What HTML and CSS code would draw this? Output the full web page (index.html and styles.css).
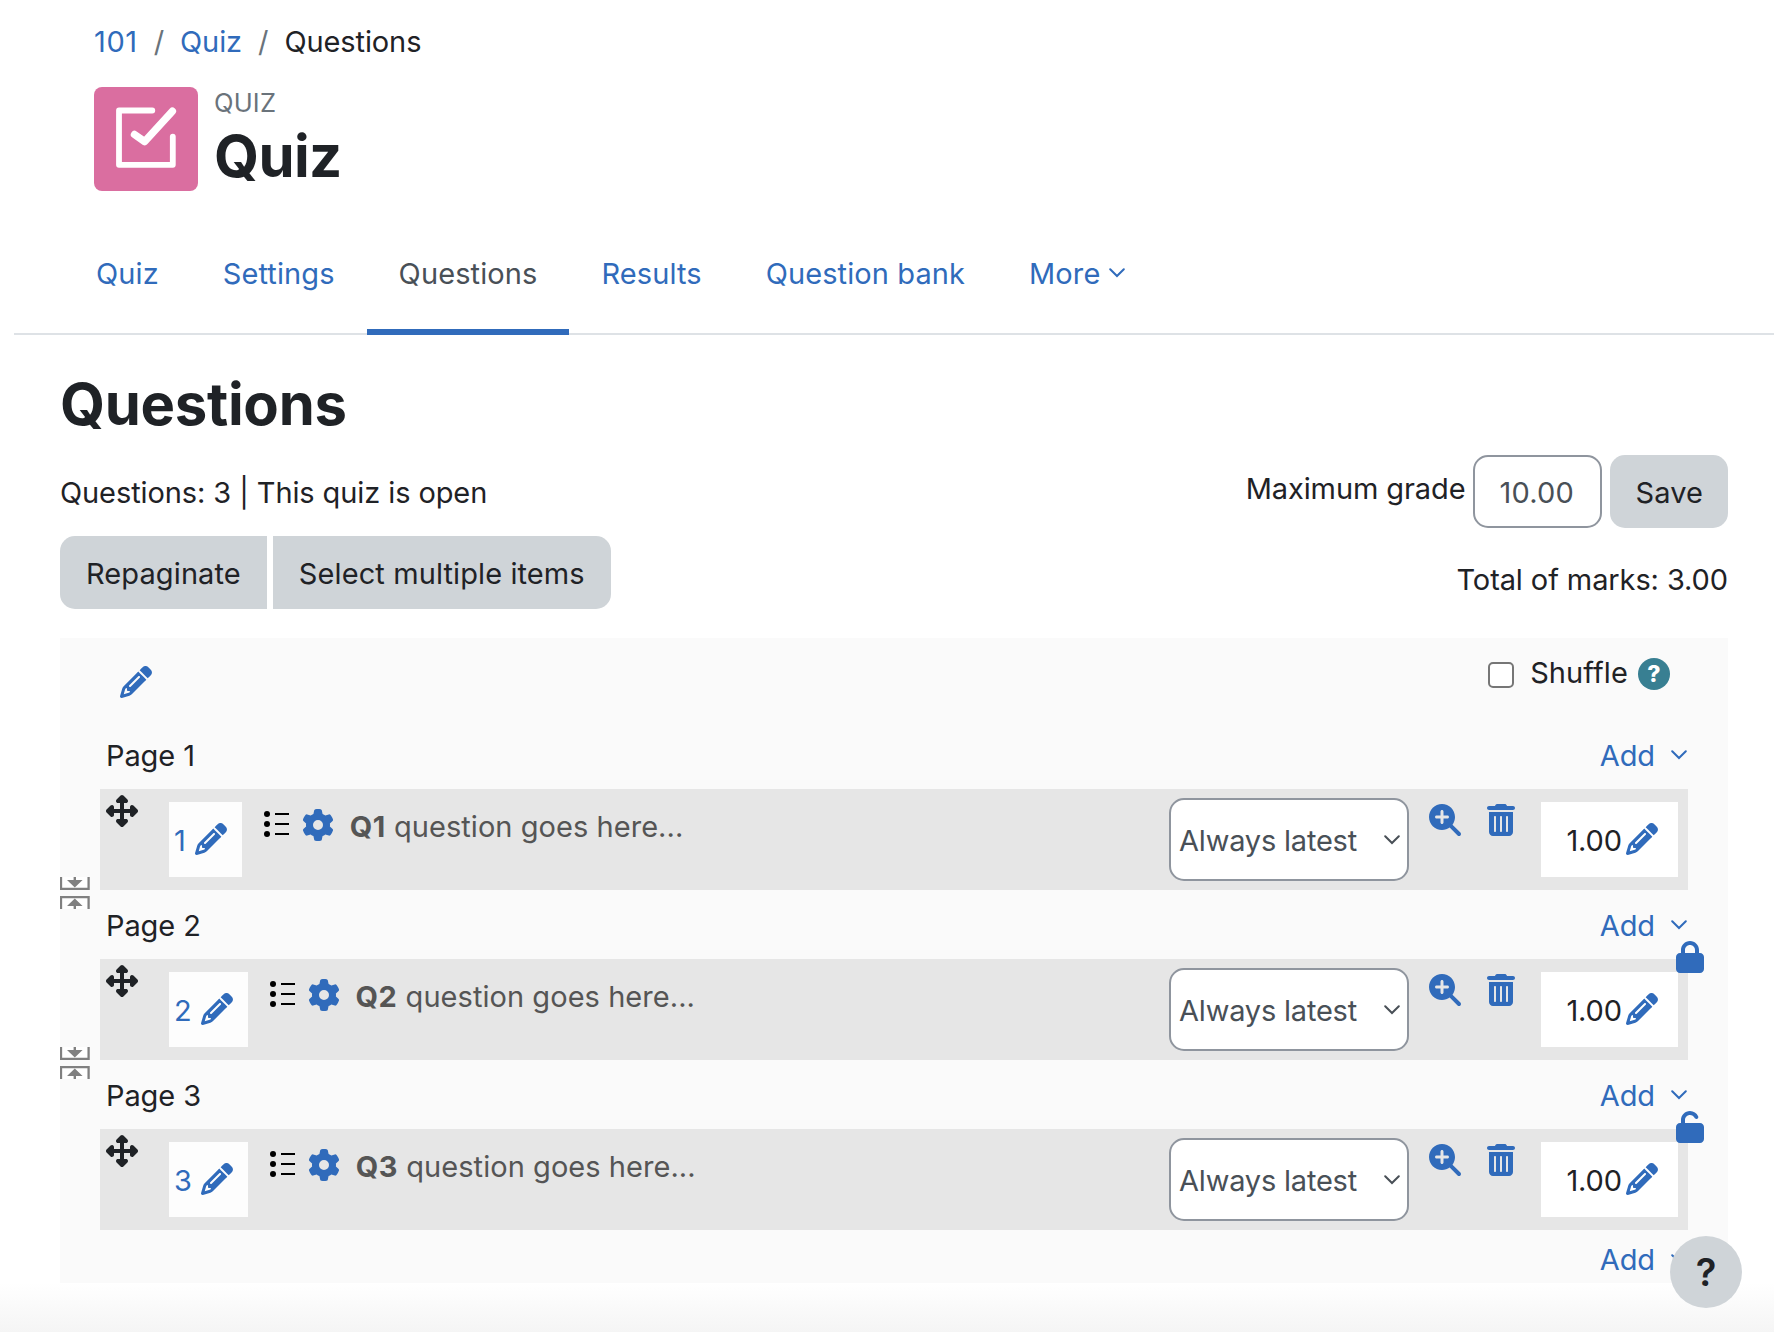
FILE: index.html
```html
<!DOCTYPE html>
<html lang="en">
<head>
    <meta charset="UTF-8">
    <meta name="viewport" content="width=device-width, initial-scale=1.0">
    <title>Quiz: Questions</title>
    <link rel="stylesheet" href="styles.css">
</head>
<body>
    <!-- Shared icons -->
    <svg class="sprite">
        <symbol id="pencil" viewBox="0 0 512 512"><path d="M410.3 231l11.3-11.3-33.9-33.9-62.1-62.1L291.7 89.8l-11.3 11.3-22.6 22.6L58.6 322.9c-10.4 10.4-18 23.3-22.2 37.4L1 480.7c-2.5 8.4-.2 17.5 6.1 23.7s15.3 8.5 23.7 6.1l120.3-35.4c14.1-4.2 27-11.8 37.4-22.2L387.7 253.7 410.3 231zM160 399.4l-9.1 22.7c-4 3.1-8.5 5.4-13.3 6.9L59.4 452l23-78.1c1.4-4.9 3.8-9.4 6.9-13.3l22.7-9.1v32c0 8.8 7.2 16 16 16h32zM362.7 18.7L348.3 33.2 325.7 55.8 314.3 67.1l33.9 33.9 62.1 62.1 33.9 33.9 11.3-11.3 22.6-22.6 14.5-14.5c25-25 25-65.5 0-90.5L453.3 18.7c-25-25-65.5-25-90.5 0zm-47.4 168l-144 144c-6.2 6.2-16.4 6.2-22.6 0s-6.2-16.4 0-22.6l144-144c6.2-6.2 16.4-6.2 22.6 0s6.2 16.4 0 22.6z"/></symbol>
        <symbol id="gear" viewBox="0 0 512 512"><path d="M495.9 166.6c3.2 8.7 .5 18.4-6.4 24.6l-43.3 39.4c1.1 8.3 1.7 16.8 1.7 25.4s-.6 17.1-1.7 25.4l43.3 39.4c6.9 6.2 9.6 15.9 6.4 24.6c-4.4 11.9-9.7 23.3-15.8 34.3l-4.7 8.1c-6.6 11-14 21.4-22.1 31.2c-5.9 7.2-15.7 9.6-24.5 6.8l-55.7-17.7c-13.4 10.3-28.2 18.9-44 25.4l-12.5 57.1c-2 9.1-9 16.3-18.2 17.8c-13.8 2.3-28 3.5-42.5 3.5s-28.7-1.2-42.5-3.5c-9.2-1.5-16.2-8.7-18.2-17.8l-12.5-57.1c-15.8-6.5-30.6-15.1-44-25.4L83.1 425.9c-8.8 2.8-18.6 .3-24.5-6.8c-8.1-9.8-15.5-20.2-22.1-31.2l-4.7-8.1c-6.1-11-11.4-22.4-15.8-34.3c-3.2-8.7-.5-18.4 6.4-24.6l43.3-39.4C64.6 273.1 64 264.6 64 256s.6-17.1 1.7-25.4L22.4 191.2c-6.9-6.2-9.6-15.9-6.4-24.6c4.4-11.9 9.7-23.3 15.8-34.3l4.7-8.1c6.6-11 14-21.4 22.1-31.2c5.9-7.2 15.7-9.6 24.5-6.8l55.7 17.7c13.4-10.3 28.2-18.9 44-25.4l12.5-57.1c2-9.1 9-16.3 18.2-17.8C227.3 1.2 241.5 0 256 0s28.7 1.2 42.5 3.5c9.2 1.5 16.2 8.7 18.2 17.8l12.5 57.1c15.8 6.5 30.6 15.1 44 25.4l55.7-17.7c8.8-2.8 18.6-.3 24.5 6.8c8.1 9.8 15.5 20.2 22.1 31.2l4.7 8.1c6.1 11 11.4 22.4 15.8 34.3zM256 336a80 80 0 1 0 0-160 80 80 0 1 0 0 160z"/></symbol>
        <symbol id="move" viewBox="0 0 512 512"><path d="M278.6 9.4c-12.5-12.5-32.8-12.5-45.3 0l-64 64c-9.2 9.2-11.9 22.9-6.9 34.9s16.6 19.8 29.6 19.8h32v96H128V192c0-12.9-7.8-24.6-19.8-29.6s-25.7-2.2-34.9 6.9l-64 64c-12.5 12.5-12.5 32.8 0 45.3l64 64c9.2 9.2 22.9 11.9 34.9 6.9s19.8-16.6 19.8-29.6V288h96v96H192c-12.9 0-24.6 7.8-29.6 19.8s-2.2 25.7 6.9 34.9l64 64c12.5 12.5 32.8 12.5 45.3 0l64-64c9.2-9.2 11.9-22.9 6.9-34.9s-16.6-19.8-29.6-19.8H288V288h96v32c0 12.9 7.8 24.6 19.8 29.6s25.7 2.2 34.9-6.9l64-64c12.5-12.5 12.5-32.8 0-45.3l-64-64c-9.2-9.2-22.9-11.9-34.9-6.9s-19.8 16.6-19.8 29.6v32H288V128h32c12.9 0 24.6-7.8 29.6-19.8s2.2-25.7-6.9-34.9l-64-64z"/></symbol>
        <symbol id="preview" viewBox="0 0 512 512"><path d="M416 208c0 45.9-14.9 88.3-40 122.7L502.6 457.4c12.5 12.5 12.5 32.8 0 45.3s-32.8 12.5-45.3 0L330.7 376c-34.4 25.2-76.8 40-122.7 40C93.1 416 0 322.9 0 208S93.1 0 208 0S416 93.1 416 208zM184 296c0 13.3 10.7 24 24 24s24-10.7 24-24V232h64c13.3 0 24-10.7 24-24s-10.7-24-24-24H232V120c0-13.3-10.7-24-24-24s-24 10.7-24 24v64H120c-13.3 0-24 10.7-24 24s10.7 24 24 24h64v64z"/></symbol>
        <symbol id="trash" viewBox="0 0 448 512"><path fill-rule="evenodd" d="M135.2 17.7L128 32H32C14.3 32 0 46.3 0 64S14.3 96 32 96H416c17.7 0 32-14.3 32-32s-14.3-32-32-32H320l-7.2-14.3C307.4 6.8 296.3 0 284.2 0H163.8c-12.1 0-23.2 6.8-28.6 17.7zM32 128V448c0 35.3 28.7 64 64 64H352c35.3 0 64-28.7 64-64V128zM112 208c0-8.8 7.2-16 16-16s16 7.2 16 16V432c0 8.8-7.2 16-16 16s-16-7.2-16-16zM208 208c0-8.8 7.2-16 16-16s16 7.2 16 16V432c0 8.8-7.2 16-16 16s-16-7.2-16-16zM304 208c0-8.8 7.2-16 16-16s16 7.2 16 16V432c0 8.8-7.2 16-16 16s-16-7.2-16-16z"/></symbol>
        <symbol id="lock" viewBox="0 0 448 512"><path d="M144 144v48H304V144c0-44.2-35.8-80-80-80s-80 35.8-80 80zM80 192V144C80 64.5 144.5 0 224 0s144 64.5 144 144v48h16c35.3 0 64 28.7 64 64V448c0 35.3-28.7 64-64 64H64c-35.3 0-64-28.7-64-64V256c0-35.3 28.7-64 64-64H80z"/></symbol>
        <symbol id="unlock" viewBox="0 0 448 512"><path d="M144 144c0-44.2 35.8-80 80-80c31.9 0 59.4 18.6 72.3 45.7c7.6 16 26.7 22.8 42.6 15.2s22.8-26.7 15.2-42.6C331 33.7 281.5 0 224 0C144.5 0 80 64.5 80 144v48H64c-35.3 0-64 28.7-64 64V448c0 35.3 28.7 64 64 64H384c35.3 0 64-28.7 64-64V256c0-35.3-28.7-64-64-64H144V144z"/></symbol>
        <symbol id="chevron" viewBox="0 0 16 10"><path d="M1.2 1.2L8 8L14.8 1.2" fill="none" stroke="currentColor" stroke-width="2" stroke-linecap="round"/></symbol>
        <symbol id="multichoice" viewBox="0 0 26 26"><circle cx="3" cy="3" r="3"/><circle cx="3" cy="13" r="3"/><circle cx="3" cy="23" r="3"/><path d="M11 2h14v2H11zM11 12h14v2H11zM11 22h14v2H11z"/></symbol>
        <symbol id="pagebreak" viewBox="0 0 30 32"><path d="M0 0h29.6v13H0zM0 19h29.6v13H0z" fill="#fff"/><path d="M1 0v11.8h27.6V0M1 32V20.2h27.6V32" fill="none" stroke="#808080" stroke-width="2.3"/><path d="M13.6 0h2.4v3h6.6l-7.8 7.4-7.8-7.4h6.6zM13.6 32h2.4v-3h6.6l-7.8-7.4-7.8 7.4h6.6z" fill="#808080"/></symbol>
    </svg>

    <nav class="breadcrumb">
        <a href="#">101</a><span class="sep">/</span><a href="#">Quiz</a><span class="sep">/</span><span>Questions</span>
    </nav>

    <header class="page-header">
        <div class="activity-icon">
            <svg viewBox="0 0 104 104">
                <path stroke-width="5.8" d="M58.3 23.5H25V77.8H78.8V49.6"/>
                <path stroke-width="7.4" d="M40.5 47.5L50.7 54.6L78.4 24.2"/>
            </svg>
        </div>
        <div class="page-title">
            <div class="activity-type">QUIZ</div>
            <h1>Quiz</h1>
        </div>
    </header>

    <nav class="tabs">
        <a href="#">Quiz</a>
        <a href="#">Settings</a>
        <a href="#" class="active">Questions</a>
        <a href="#">Results</a>
        <a href="#">Question bank</a>
        <a href="#">More<svg class="chevron"><use href="#chevron"/></svg></a>
    </nav>

    <main class="content">
        <h2>Questions</h2>

        <div class="controls">
            <div class="controls-left">
                <div>Questions: 3 | This quiz is open</div>
                <div class="btn-group">
                    <button class="btn">Repaginate</button>
                    <button class="btn">Select multiple items</button>
                </div>
            </div>
            <div class="controls-right">
                <div class="max-grade">
                    <label for="maxgrade">Maximum grade</label>
                    <input type="text" id="maxgrade" value="10.00">
                    <button class="btn save">Save</button>
                </div>
                <div class="total">Total of marks: 3.00</div>
            </div>
        </div>

        <div class="quiz-box">
            <div class="section-head">
                <svg class="icon"><use href="#pencil"/></svg>
                <div class="shuffle">
                    <input type="checkbox" id="shuffle">
                    <label for="shuffle">Shuffle</label>
                    <span class="help-icon">?</span>
                </div>
            </div>

            <div class="page-row">
                <span>Page 1</span>
                <a href="#" class="add">Add<svg class="chevron"><use href="#chevron"/></svg></a>
            </div>
            <div class="slot">
                <svg class="icon move"><use href="#move"/></svg>
                <a href="#" class="number">1<svg class="icon"><use href="#pencil"/></svg></a>
                <svg class="type"><use href="#multichoice"/></svg>
                <svg class="icon gear"><use href="#gear"/></svg>
                <div class="question"><b>Q1</b> question goes here...</div>
                <div class="version">Always latest<svg class="chevron"><use href="#chevron"/></svg></div>
                <svg class="icon preview"><use href="#preview"/></svg>
                <svg class="icon trash"><use href="#trash"/></svg>
                <div class="mark">1.00<svg class="icon"><use href="#pencil"/></svg></div>
                <svg class="pagebreak"><use href="#pagebreak"/></svg>
            </div>

            <div class="page-row">
                <span>Page 2</span>
                <a href="#" class="add">Add<svg class="chevron"><use href="#chevron"/></svg></a>
            </div>
            <div class="slot">
                <svg class="icon move"><use href="#move"/></svg>
                <a href="#" class="number">2<svg class="icon"><use href="#pencil"/></svg></a>
                <svg class="type"><use href="#multichoice"/></svg>
                <svg class="icon gear"><use href="#gear"/></svg>
                <div class="question"><b>Q2</b> question goes here...</div>
                <div class="version">Always latest<svg class="chevron"><use href="#chevron"/></svg></div>
                <svg class="icon preview"><use href="#preview"/></svg>
                <svg class="icon trash"><use href="#trash"/></svg>
                <div class="mark">1.00<svg class="icon"><use href="#pencil"/></svg></div>
                <svg class="pagebreak"><use href="#pagebreak"/></svg>
                <svg class="dependency"><use href="#lock"/></svg>
            </div>

            <div class="page-row">
                <span>Page 3</span>
                <a href="#" class="add">Add<svg class="chevron"><use href="#chevron"/></svg></a>
            </div>
            <div class="slot">
                <svg class="icon move"><use href="#move"/></svg>
                <a href="#" class="number">3<svg class="icon"><use href="#pencil"/></svg></a>
                <svg class="type"><use href="#multichoice"/></svg>
                <svg class="icon gear"><use href="#gear"/></svg>
                <div class="question"><b>Q3</b> question goes here...</div>
                <div class="version">Always latest<svg class="chevron"><use href="#chevron"/></svg></div>
                <svg class="icon preview"><use href="#preview"/></svg>
                <svg class="icon trash"><use href="#trash"/></svg>
                <div class="mark">1.00<svg class="icon"><use href="#pencil"/></svg></div>
                <svg class="dependency"><use href="#unlock"/></svg>
            </div>

            <div class="page-row last">
                <a href="#" class="add">Add<svg class="chevron"><use href="#chevron"/></svg></a>
            </div>
        </div>
    </main>

    <div class="footer-shade"></div>
    <button class="help-button">?</button>
</body>
</html>
```
FILE: styles.css
```css
* {
    box-sizing: border-box;
}
body {
    margin: 0;
    padding-top: 19px;
    height: 1332px;
    overflow: hidden;
    background: #fff;
    color: #1f2226;
    font-family: Inter, "Liberation Sans", sans-serif;
    font-size: 29px;
    line-height: 45px;
    letter-spacing: -0.1px;
}
a {
    color: #306bbb;
    text-decoration: none;
}
h1, h2 {
    margin: 0;
    font-size: 58px;
    line-height: 69px;
    font-weight: 700;
    letter-spacing: -0.3px;
}
h1 {
    letter-spacing: -0.6px;
}
button, input {
    font: inherit;
    letter-spacing: inherit;
    color: inherit;
}
svg {
    display: block;
    flex: none;
    fill: currentColor;
}
.sprite {
    position: absolute;
    width: 0;
    height: 0;
}
.icon {
    width: 32px;
    height: 32px;
    color: #306bbb;
}
.chevron {
    width: 16px;
    height: 10px;
}
.breadcrumb {
    display: flex;
    padding-left: 94px;
}
.breadcrumb a:first-child {
    letter-spacing: 0.6px;
}
.sep {
    padding: 0 16px;
    color: #6a737b;
}
.page-header {
    display: flex;
    gap: 16px;
    margin-top: 23px;
    padding-left: 94px;
}
.activity-icon {
    width: 104px;
    height: 104px;
    border-radius: 8px;
    background: #da6ea0;
}
.activity-icon svg {
    fill: none;
    stroke: #fff;
    stroke-linecap: round;
    stroke-linejoin: round;
}
.activity-type {
    height: 35px;
    font-size: 25.5px;
    line-height: 32px;
    letter-spacing: 0.2px;
    color: #6a737b;
}
.tabs {
    display: flex;
    height: 122px;
    margin: 22px 0 0 14px;
    padding-left: 50px;
    border-bottom: 2px solid #dee2e6;
    letter-spacing: 0.1px;
}
.tabs a {
    display: flex;
    height: 122px;
    padding: 38px 32px 0;
}
.tabs a.active {
    color: #495057;
    border-bottom: 6px solid #306bbb;
}
.tabs .chevron {
    margin: 17px 0 0 9px;
}
.content {
    padding: 35px 46px 0 60px;
}
.controls {
    display: flex;
    justify-content: space-between;
    height: 183px;
    margin-top: 16px;
}
.controls-left {
    padding-top: 15px;
}
.btn {
    height: 73px;
    padding: 2px 26px 0;
    border: none;
    border-radius: 15px;
    background: #cfd4d8;
    letter-spacing: 0.1px;
}
.btn.save {
    padding: 2px 25px 0;
}
.btn-group {
    display: flex;
    gap: 6px;
    margin-top: 21px;
}
.btn-group .btn:first-child {
    border-radius: 15px 0 0 15px;
}
.btn-group .btn:last-child {
    border-radius: 0 15px 15px 0;
}
.max-grade {
    display: flex;
    justify-content: flex-end;
}
.max-grade label {
    margin-top: 11px;
}
.max-grade input {
    width: 129px;
    height: 73px;
    margin: 0 8px;
    padding: 2px 24px 0;
    border: 2px solid #8f959e;
    border-radius: 15px;
    background: #fff;
    color: #495057;
    letter-spacing: 0.2px;
}
.total {
    margin-top: 29px;
    text-align: right;
}
.quiz-box {
    height: 645px;
    padding: 0 40px;
    background: #fafafa;
}
.section-head {
    display: flex;
    justify-content: space-between;
    height: 95px;
    padding: 12px 18px 0 20px;
}
.section-head > .icon {
    margin-top: 16px;
}
.shuffle {
    display: flex;
    letter-spacing: 0.1px;
}
.shuffle input {
    appearance: none;
    width: 26px;
    height: 26px;
    margin: 12px 16px 0 0;
    border: 2px solid #767676;
    border-radius: 5px;
    background: #fff;
}
.help-icon {
    width: 32px;
    height: 32px;
    margin: 8px 0 0 10px;
    border-radius: 50%;
    background: #387f92;
    color: #fff;
    font-size: 23px;
    font-weight: 800;
    line-height: 32px;
    text-align: center;
}
.page-row {
    display: flex;
    justify-content: space-between;
    padding-left: 6px;
}
.page-row.last {
    justify-content: flex-end;
    margin-top: -6px;
}
.add {
    display: flex;
}
.add .chevron {
    margin: 17px 1px 0 16px;
}
.slot {
    position: relative;
    display: flex;
    align-items: flex-start;
    height: 101px;
    margin: 11px 0 13px;
    background: #e6e6e6;
}
.move {
    margin: 6px 31px 0 6px;
    color: #1f2226;
}
.number, .mark {
    display: flex;
    height: 75px;
    margin-top: 13px;
    padding: 16px 15px 0 5px;
    background: #fdfdfd;
}
.number .icon {
    margin: 5px 0 0 9px;
}
.mark .icon {
    margin: 5px 0 0 4px;
}
.type {
    width: 26px;
    height: 26px;
    margin: 22px 12px 0 22px;
    color: #000;
}
.question {
    flex: 1;
    margin: 15px 0 0 16px;
    color: #555;
    letter-spacing: 0.05px;
}
.question b {
    letter-spacing: 0.5px;
}
.gear {
    margin-top: 20px;
}
.version {
    display: flex;
    justify-content: space-between;
    width: 240px;
    height: 83px;
    margin-top: 9px;
    padding: 18px 7px 0 8px;
    border: 2px solid #8f959e;
    border-radius: 15px;
    background: #fff;
    color: #495057;
    letter-spacing: -0.2px;
}
.version .chevron {
    margin-top: 17px;
}
.preview {
    margin: 15px 26px 0 20px;
}
.trash {
    width: 28px;
    margin: 15px 26px 0 0;
}
.mark {
    justify-content: flex-end;
    width: 137px;
    margin-right: 10px;
    padding-right: 20px;
    background: #fff;
}
/* Icons that hang over the edge of a slot */
.pagebreak {
    position: absolute;
    left: -40px;
    top: 88px;
    width: 30px;
    height: 32px;
}
.dependency {
    position: absolute;
    right: -16px;
    top: -18px;
    width: 28px;
    height: 32px;
    color: #306bbb;
}
.footer-shade {
    height: 49px;
    background: linear-gradient(#fff, #f5f5f5);
}
.help-button {
    position: fixed;
    right: 32px;
    bottom: 24px;
    width: 72px;
    height: 72px;
    padding: 0;
    border: none;
    border-radius: 50%;
    background: #cfd4d8;
    font-size: 38px;
    font-weight: 600;
}
```
